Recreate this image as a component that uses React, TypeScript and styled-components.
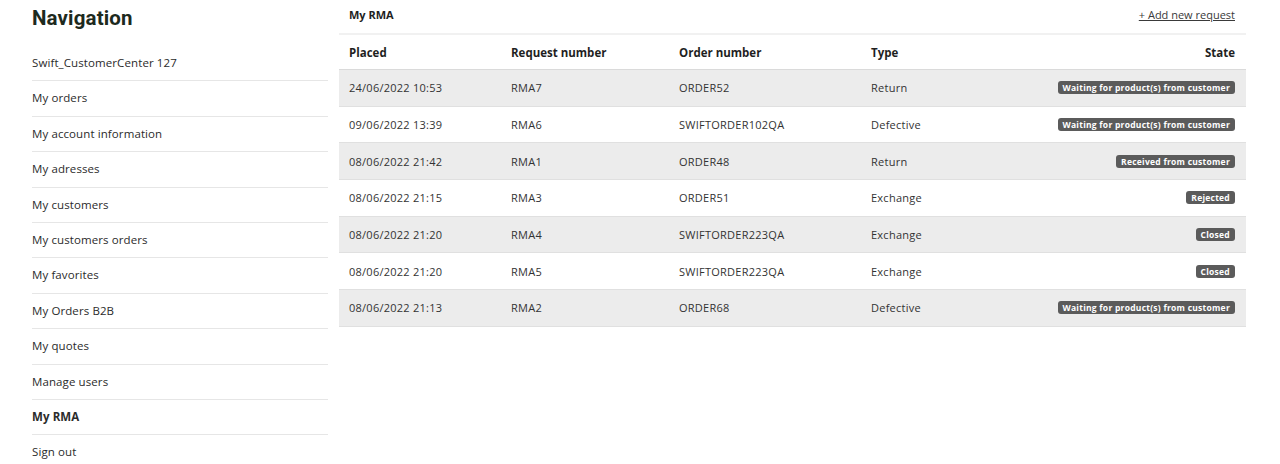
import React from "react";
import styled, { createGlobalStyle } from "styled-components";

const GlobalStyle = createGlobalStyle`
  body {
    margin: 0;
    background: #ffffff;
    font-family: "Open Sans", "Liberation Sans", sans-serif;
    color: #2e2e2e;
  }
`;

const Page = styled.div`
  display: grid;
  grid-template-columns: 296px 907px;
  column-gap: 11px;
  padding-left: 32px;
  width: 1280px;
  height: 464px;
  box-sizing: border-box;
  overflow: hidden;
`;

const Sidebar = styled.nav`
  display: flex;
  flex-direction: column;
`;

const NavTitle = styled.h2`
  margin: 0 0 10px;
  font-family: Roboto, "Liberation Sans", sans-serif;
  font-size: 20.5px;
  line-height: 36px;
  letter-spacing: 0.15px;
  font-weight: 700;
  color: #1d2a1d;
`;

const NavItem = styled.a<{ $active?: boolean }>`
  display: block;
  padding: 10px 0;
  line-height: 14.4px;
  font-size: 11.5px;
  letter-spacing: 0.1px;
  font-weight: ${(p) => (p.$active ? 700 : 400)};
  color: #2b2b2b;
  border-bottom: 1px solid #e6e6e6;
  text-decoration: none;

  &:last-child {
    border-bottom: none;
  }
`;

const Main = styled.section`
  display: flex;
  flex-direction: column;
`;

const TitleBar = styled.div`
  display: flex;
  justify-content: space-between;
  align-items: flex-start;
  box-sizing: border-box;
  height: 35px;
  padding: 8px 11px 0 10px;
  border-bottom: 2px solid #f1f1f1;
`;

const Title = styled.h3`
  margin: 0;
  font-size: 11px;
  line-height: 14px;
  font-weight: 700;
  color: #1f1f1f;
`;

const AddLink = styled.a`
  font-size: 11px;
  line-height: 14px;
  color: #3a3a3a;
  text-decoration: underline;
`;

const Row = styled.div<{ $shade?: boolean; $head?: boolean }>`
  display: grid;
  grid-template-columns: 162px 168px 192px 1fr auto;
  align-items: center;
  box-sizing: border-box;
  height: ${(p) => (p.$head ? "35px" : "36.7px")};
  padding: 0 11px 0 10px;
  background: ${(p) => (p.$shade ? "#ececec" : "#ffffff")};
  border-bottom: 1px solid ${(p) => (p.$head ? "#dadada" : "#e0e0e0")};
  font-size: ${(p) => (p.$head ? "11.5px" : "11px")};
  letter-spacing: ${(p) => (p.$head ? "0" : "0.25px")};
  font-weight: ${(p) => (p.$head ? 700 : 400)};
  color: ${(p) => (p.$head ? "#1f1f1f" : "#333333")};
`;

const StateCell = styled.div`
  display: flex;
  justify-content: flex-end;
`;

const Badge = styled.span`
  display: inline-block;
  padding: 0 5px;
  height: 13px;
  line-height: 13px;
  border-radius: 3px;
  background: #5b5b5b;
  color: #ffffff;
  font-size: 8.5px;
  font-weight: 700;
  white-space: nowrap;
`;

const navItems = [
  "Swift_CustomerCenter 127",
  "My orders",
  "My account information",
  "My adresses",
  "My customers",
  "My customers orders",
  "My favorites",
  "My Orders B2B",
  "My quotes",
  "Manage users",
  "My RMA",
  "Sign out",
];

const rmas = [
  ["24/06/2022 10:53", "RMA7", "ORDER52", "Return", "Waiting for product(s) from customer"],
  ["09/06/2022 13:39", "RMA6", "SWIFTORDER102QA", "Defective", "Waiting for product(s) from customer"],
  ["08/06/2022 21:42", "RMA1", "ORDER48", "Return", "Received from customer"],
  ["08/06/2022 21:15", "RMA3", "ORDER51", "Exchange", "Rejected"],
  ["08/06/2022 21:20", "RMA4", "SWIFTORDER223QA", "Exchange", "Closed"],
  ["08/06/2022 21:20", "RMA5", "SWIFTORDER223QA", "Exchange", "Closed"],
  ["08/06/2022 21:13", "RMA2", "ORDER68", "Defective", "Waiting for product(s) from customer"],
];

function App() {
  return (
    <>
      <GlobalStyle />
      <Page>
        <Sidebar>
          <NavTitle>Navigation</NavTitle>
          {navItems.map((item) => (
            <NavItem key={item} $active={item === "My RMA"}>
              {item}
            </NavItem>
          ))}
        </Sidebar>
        <Main>
          <TitleBar>
            <Title>My RMA</Title>
            <AddLink>+ Add new request</AddLink>
          </TitleBar>
          <Row $head>
            <div>Placed</div>
            <div>Request number</div>
            <div>Order number</div>
            <div>Type</div>
            <StateCell>State</StateCell>
          </Row>
          {rmas.map(([placed, req, order, type, state], i) => (
            <Row key={req} $shade={i % 2 === 0}>
              <div>{placed}</div>
              <div>{req}</div>
              <div>{order}</div>
              <div>{type}</div>
              <StateCell>
                <Badge>{state}</Badge>
              </StateCell>
            </Row>
          ))}
        </Main>
      </Page>
    </>
  );
}

export default App;
